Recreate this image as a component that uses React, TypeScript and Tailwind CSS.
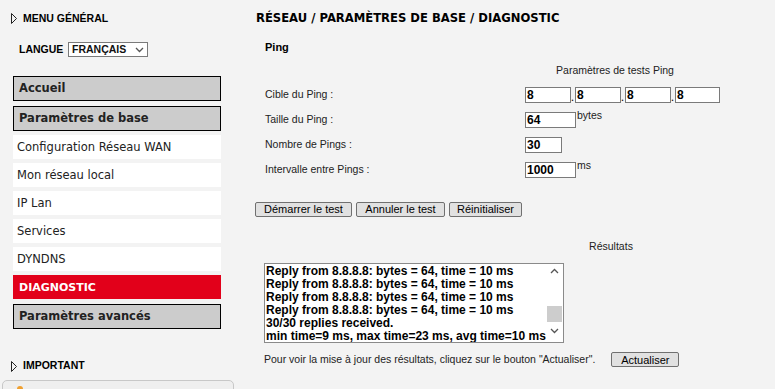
import { ReactNode } from "react";

const verdana = { fontFamily: '"DejaVu Sans", Verdana, sans-serif' };
const tahoma = { fontFamily: '"Liberation Sans", Arial, sans-serif' };

function Arrow() {
  return (
    <svg width="6" height="11" viewBox="0 0 6 11" className="shrink-0">
      <path d="M0.5 0.5 L5.5 5.5 L0.5 10.5 Z" fill="none" stroke="#222" strokeWidth="1" />
    </svg>
  );
}

function Chevron({ up }: { up?: boolean }) {
  return (
    <svg width="9" height="6" viewBox="0 0 9 6">
      <path d={up ? "M1 5 L4.5 1.5 L8 5" : "M1 1 L4.5 4.5 L8 1"} fill="none" stroke="#555" strokeWidth="1.3" />
    </svg>
  );
}

const menuLinks = ["Configuration Réseau WAN", "Mon réseau local", "IP Lan", "Services", "DYNDNS"];

function GrayItem({ children, className = "" }: { children: ReactNode; className?: string }) {
  return (
    <div
      className={`h-[25px] w-[208px] border border-black bg-[#cccccc] pl-[5px] pt-[1px] flex items-center text-[11.5px] font-bold text-[#222] ${className}`}
      style={verdana}
    >
      {children}
    </div>
  );
}

function Sidebar() {
  return (
    <div className="w-[236px] shrink-0 flex flex-col">
      <div className="flex items-center gap-[6px] pl-[11px] pt-[13px] h-[24px]">
        <Arrow />
        <span className="text-[10.5px] font-bold text-black" style={tahoma}>MENU GÉNÉRAL</span>
      </div>
      <div className="flex items-center pl-[19px] mt-[18px] h-[15px]">
        <span className="text-[10.5px] font-bold text-black w-[49px]" style={tahoma}>LANGUE</span>
        <div className="w-[80px] h-[15px] border border-[#7a7a7a] bg-white flex items-center justify-between pl-[3px] pr-[3px]">
          <span className="text-[10.5px] font-bold text-[#111]" style={tahoma}>FRANÇAIS</span>
          <Chevron />
        </div>
      </div>
      <div className="pl-[13px] mt-[19px] flex flex-col">
        <GrayItem>Accueil</GrayItem>
        <GrayItem className="mt-[5px]">Paramètres de base</GrayItem>
        {menuLinks.map((l) => (
          <div
            key={l}
            className="h-[24px] w-[208px] mt-[4px] bg-white pl-[4px] pt-[2px] flex items-center text-[11.5px] text-[#222]"
            style={verdana}
          >
            {l}
          </div>
        ))}
        <div
          className="h-[24px] w-[208px] mt-[4px] bg-[#e2001a] pl-[6px] pt-[2px] flex items-center text-[11px] font-bold text-white"
          style={verdana}
        >
          DIAGNOSTIC
        </div>
        <GrayItem className="mt-[5px]">Paramètres avancés</GrayItem>
      </div>
      <div className="flex items-center gap-[6px] pl-[11px] mt-[30px] h-[14px]">
        <Arrow />
        <span className="text-[10.5px] font-bold text-black" style={tahoma}>IMPORTANT</span>
      </div>
      <div className="ml-[2px] mt-[7px] w-[232px] h-[20px] rounded-t-[5px] border border-[#c8c8c8] bg-[#efefef] pl-[14px] pt-[5px]">
        <div className="w-[6px] h-[6px] rounded-full bg-[#f0a030]" />
      </div>
    </div>
  );
}

function Field({ value, w }: { value: string; w: string }) {
  return (
    <div
      className={`${w} h-[16px] border border-[#7a7a7a] bg-white pl-[1px] flex items-center text-[12px] font-bold text-black`}
      style={tahoma}
    >
      {value}
    </div>
  );
}

function Button({ children, w }: { children: ReactNode; w: string }) {
  return (
    <div
      className={`${w} h-[15px] border border-[#707070] rounded-[2px] bg-[#e1e1e1] flex items-center justify-center text-[11px] text-black`}
      style={tahoma}
    >
      {children}
    </div>
  );
}

const replies = [
  "Reply from 8.8.8.8: bytes = 64, time = 10 ms",
  "Reply from 8.8.8.8: bytes = 64, time = 10 ms",
  "Reply from 8.8.8.8: bytes = 64, time = 10 ms",
  "Reply from 8.8.8.8: bytes = 64, time = 10 ms",
  "30/30 replies received.",
  "min time=9 ms, max time=23 ms, avg time=10 ms",
];

function Row({ label, children }: { label: string; children: ReactNode }) {
  return (
    <div className="flex items-center h-[25px]">
      <span className="w-[260px] text-[10.5px] text-[#222]" style={tahoma}>{label}</span>
      <div className="flex items-center">{children}</div>
    </div>
  );
}

function Main() {
  return (
    <div className="flex-1 pl-[20px] pt-[11px] flex flex-col">
      <div className="text-[11.6px] font-bold text-black h-[14px] leading-[14px]" style={verdana}>
        RÉSEAU / PARAMÈTRES DE BASE / DIAGNOSTIC
      </div>
      <div className="pl-[9px] mt-[16px] text-[11px] font-bold text-black leading-[13px]" style={tahoma}>Ping</div>
      <div className="w-[720px] pl-[9px] mt-[10px] flex">
        <div className="w-[260px]" />
        <div className="w-[180px] text-center text-[10.5px] text-[#222] leading-[13px]" style={tahoma}>
          Paramètres de tests Ping
        </div>
      </div>
      <div className="pl-[9px] mt-[5px] flex flex-col">
        <Row label="Cible du Ping :">
          <Field value="8" w="w-[46px]" />
          <span className="w-[4px] text-[11px] self-end leading-[12px]">.</span>
          <Field value="8" w="w-[46px]" />
          <span className="w-[4px] text-[11px] self-end leading-[12px]">.</span>
          <Field value="8" w="w-[46px]" />
          <span className="w-[4px] text-[11px] self-end leading-[12px]">.</span>
          <Field value="8" w="w-[45px]" />
        </Row>
        <Row label="Taille du Ping :">
          <Field value="64" w="w-[51px]" />
          <span className="text-[10.5px] text-[#222] self-start -mt-[4px] ml-[1px]" style={tahoma}>bytes</span>
        </Row>
        <Row label="Nombre de Pings :">
          <Field value="30" w="w-[37px]" />
        </Row>
        <Row label="Intervalle entre Pings :">
          <Field value="1000" w="w-[51px]" />
          <span className="text-[10.5px] text-[#222] self-start -mt-[4px] ml-[1px]" style={tahoma}>ms</span>
        </Row>
      </div>
      <div className="flex gap-[4px] mt-[20px] -ml-[1px]">
        <Button w="w-[97px]">Démarrer le test</Button>
        <Button w="w-[89px]">Annuler le test</Button>
        <Button w="w-[73px]">Réinitialiser</Button>
      </div>
      <div className="w-[720px] flex mt-[23px]">
        <div className="w-[300px]" />
        <div className="w-[110px] text-center text-[10.5px] text-[#222] leading-[13px]" style={tahoma}>Résultats</div>
      </div>
      <div className="ml-[8px] mt-[10px] w-[300px] h-[80px] border border-[#8a8a8a] bg-white flex">
        <div className="flex-1 pl-[1px] pt-[1px] overflow-hidden">
          {replies.map((r, i) => (
            <div key={i} className="text-[12px] font-bold text-black leading-[13px] whitespace-nowrap" style={tahoma}>
              {r}
            </div>
          ))}
        </div>
        <div className="w-[17px] flex flex-col items-center pt-[4px]">
          <Chevron up />
          <div className="w-[15px] h-[16px] bg-[#cdcdcd] mt-[32px]" />
          <div className="mt-[6px]">
            <Chevron />
          </div>
        </div>
      </div>
      <div className="ml-[8px] mt-[9px] flex items-center gap-[16px]">
        <span className="text-[10.5px] text-[#222]" style={tahoma}>
          Pour voir la mise à jour des résultats, cliquez sur le bouton "Actualiser".
        </span>
        <Button w="w-[68px]">Actualiser</Button>
      </div>
    </div>
  );
}

export default function App() {
  return (
    <div className="w-[775px] h-[389px] bg-[#f3f3f3] flex overflow-hidden">
      <Sidebar />
      <Main />
    </div>
  );
}
